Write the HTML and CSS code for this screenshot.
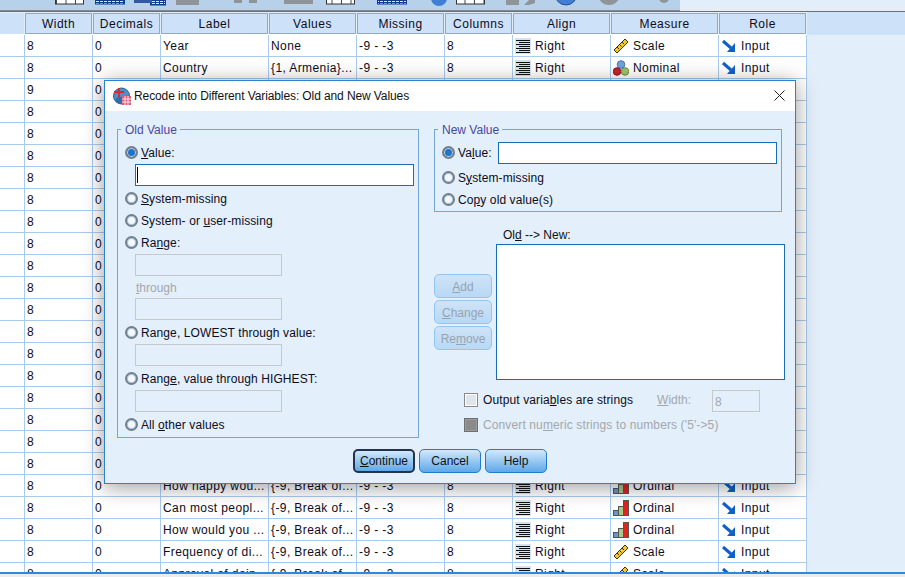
FILE: index.html
```html
<!DOCTYPE html>
<html lang="en">
<head>
    <meta charset="UTF-8">
    <title>Recode into Different Variables: Old and New Values</title>
    <link rel="stylesheet" href="styles.css">
</head>
<body>
    <svg class="defs" width="0" height="0">
        <symbol id="i-align" viewBox="0 0 16 16">
            <rect width="16" height="16" fill="#d5e3ef"/>
            <path d="M1 2.500h14M4 4.500h11M1 6.500h14M4 8.500h11M1 10.500h14M4 12.500h11M1 14.500h14" stroke="#111" fill="none"/>
        </symbol>
        <symbol id="i-scale" viewBox="0 0 16 16">
            <path d="M1 12L12 1l3 3L4 15z" fill="#f2c62c" stroke="#3d3410"/>
            <path d="M4 9l2 2M6.500 6.500l2 2M9 4l2 2" stroke="#3d3410" fill="none"/>
        </symbol>
        <symbol id="i-nominal" viewBox="0 0 16 16">
            <circle cx="8" cy="4.500" r="3.800" fill="#6ea3de" stroke="#4b76ad"/>
            <circle cx="4" cy="11.500" r="3.800" fill="#c5232b" stroke="#8c1a20"/>
            <circle cx="12" cy="11.500" r="3.800" fill="#9cc36f" stroke="#6d8f4b"/>
        </symbol>
        <symbol id="i-ordinal" viewBox="0 0 16 16">
            <rect x="0.500" y="10.500" width="5" height="5" fill="#6d94c4" stroke="#555"/>
            <rect x="5.500" y="6.500" width="5" height="9" fill="#a9c98a" stroke="#555"/>
            <rect x="10.500" y="0.500" width="5" height="15" fill="#e2231f" stroke="#555"/>
        </symbol>
        <symbol id="i-input" viewBox="0 0 14 13">
            <path d="M1 2l8 7" stroke="#1160c8" stroke-width="3" fill="none"/>
            <path d="M13 4v9H5z" fill="#1160c8"/>
        </symbol>
    </svg>

    <div class="toolbar">
        <svg class="tools" width="680" height="10">
            <defs>
                <pattern id="blue-cells" width="4" height="2" patternUnits="userSpaceOnUse">
                    <rect width="4" height="2" fill="#dbe8f7"/>
                    <path d="M0 0.500h4M3.500 0v2" stroke="#123c8c" fill="none"/>
                </pattern>
                <pattern id="white-cells" width="9.500" height="10" patternUnits="userSpaceOnUse">
                    <rect width="9.500" height="10" fill="#fff"/>
                    <path d="M9 0v10" stroke="#444" fill="none"/>
                </pattern>
            </defs>
            <g class="tool-white">
                <rect x="55.500" y="-4" width="28" height="8"/>
                <rect x="326.500" y="-4" width="28" height="8"/>
                <rect x="456.500" y="-4" width="28" height="8"/>
            </g>
            <g class="tool-blue">
                <rect x="95.500" y="-4" width="29" height="8"/>
                <rect x="377.500" y="-4" width="29" height="8"/>
                <rect x="150.500" y="-3" width="15" height="8"/>
            </g>
            <rect x="134" y="0" width="18" height="3" fill="#3555a8"/>
            <g class="tool-grey">
                <rect x="176" y="-2" width="23" height="7"/>
                <rect x="234" y="-3" width="8" height="6"/>
                <rect x="249" y="-3" width="8" height="6"/>
                <rect x="284" y="-3" width="29" height="7"/>
                <rect x="506" y="-2" width="13" height="7"/>
                <path d="M524 5l5-5h6v3l-6 2z"/>
                <circle cx="609" cy="-6" r="11"/>
                <circle cx="664" cy="-2" r="5"/>
            </g>
            <circle cx="439" cy="-2" r="8" fill="#3f7fd6"/>
            <circle cx="566" cy="-6" r="11" fill="#3f7fd6" stroke="#27508f"/>
        </svg>
        <div class="toolbar-rest"></div>
    </div>

    <div class="sheet">
        <table class="grid">
            <colgroup>
                <col class="c-type"><col class="c-68"><col class="c-68"><col class="c-108"><col class="c-88"><col class="c-88"><col class="c-68"><col class="c-98"><col class="c-108"><col class="c-88">
            </colgroup>
            <thead>
                <tr>
                    <th class="stub"></th>
                    <th>Width</th><th>Decimals</th><th>Label</th><th>Values</th><th>Missing</th><th>Columns</th><th>Align</th><th>Measure</th><th>Role</th>
                </tr>
            </thead>
            <tbody>
                <tr><td></td><td>8</td><td>0</td><td>Year</td><td>None</td><td>-9 - -3</td><td>8</td>
                    <td><svg class="ic"><use href="#i-align"/></svg>Right</td><td><svg class="ic"><use href="#i-scale"/></svg>Scale</td><td class="role"><svg class="ic-in"><use href="#i-input"/></svg>Input</td></tr>
                <tr><td></td><td>8</td><td>0</td><td>Country</td><td>{1, Armenia}...</td><td>-9 - -3</td><td>8</td>
                    <td><svg class="ic"><use href="#i-align"/></svg>Right</td><td><svg class="ic"><use href="#i-nominal"/></svg>Nominal</td><td class="role"><svg class="ic-in"><use href="#i-input"/></svg>Input</td></tr>
                <tr><td></td><td>9</td><td>0</td><td></td><td></td><td></td><td></td><td></td><td></td><td></td></tr>
                <tr><td></td><td>8</td><td>0</td><td></td><td></td><td></td><td></td><td></td><td></td><td></td></tr>
                <tr><td></td><td>8</td><td>0</td><td></td><td></td><td></td><td></td><td></td><td></td><td></td></tr>
                <tr><td></td><td>8</td><td>0</td><td></td><td></td><td></td><td></td><td></td><td></td><td></td></tr>
                <tr><td></td><td>8</td><td>0</td><td></td><td></td><td></td><td></td><td></td><td></td><td></td></tr>
                <tr><td></td><td>8</td><td>0</td><td></td><td></td><td></td><td></td><td></td><td></td><td></td></tr>
                <tr><td></td><td>8</td><td>0</td><td></td><td></td><td></td><td></td><td></td><td></td><td></td></tr>
                <tr><td></td><td>8</td><td>0</td><td></td><td></td><td></td><td></td><td></td><td></td><td></td></tr>
                <tr><td></td><td>8</td><td>0</td><td></td><td></td><td></td><td></td><td></td><td></td><td></td></tr>
                <tr><td></td><td>8</td><td>0</td><td></td><td></td><td></td><td></td><td></td><td></td><td></td></tr>
                <tr><td></td><td>8</td><td>0</td><td></td><td></td><td></td><td></td><td></td><td></td><td></td></tr>
                <tr><td></td><td>8</td><td>0</td><td></td><td></td><td></td><td></td><td></td><td></td><td></td></tr>
                <tr><td></td><td>8</td><td>0</td><td></td><td></td><td></td><td></td><td></td><td></td><td></td></tr>
                <tr><td></td><td>8</td><td>0</td><td></td><td></td><td></td><td></td><td></td><td></td><td></td></tr>
                <tr><td></td><td>8</td><td>0</td><td></td><td></td><td></td><td></td><td></td><td></td><td></td></tr>
                <tr><td></td><td>8</td><td>0</td><td></td><td></td><td></td><td></td><td></td><td></td><td></td></tr>
                <tr><td></td><td>8</td><td>0</td><td></td><td></td><td></td><td></td><td></td><td></td><td></td></tr>
                <tr><td></td><td>8</td><td>0</td><td></td><td></td><td></td><td></td><td></td><td></td><td></td></tr>
                <tr><td></td><td>8</td><td>0</td><td>How happy wou...</td><td>{-9, Break of...</td><td>-9 - -3</td><td>8</td>
                    <td><svg class="ic"><use href="#i-align"/></svg>Right</td><td><svg class="ic"><use href="#i-ordinal"/></svg>Ordinal</td><td class="role"><svg class="ic-in"><use href="#i-input"/></svg>Input</td></tr>
                <tr><td></td><td>8</td><td>0</td><td>Can most peopl...</td><td>{-9, Break of...</td><td>-9 - -3</td><td>8</td>
                    <td><svg class="ic"><use href="#i-align"/></svg>Right</td><td><svg class="ic"><use href="#i-ordinal"/></svg>Ordinal</td><td class="role"><svg class="ic-in"><use href="#i-input"/></svg>Input</td></tr>
                <tr><td></td><td>8</td><td>0</td><td>How would you ...</td><td>{-9, Break of...</td><td>-9 - -3</td><td>8</td>
                    <td><svg class="ic"><use href="#i-align"/></svg>Right</td><td><svg class="ic"><use href="#i-ordinal"/></svg>Ordinal</td><td class="role"><svg class="ic-in"><use href="#i-input"/></svg>Input</td></tr>
                <tr><td></td><td>8</td><td>0</td><td>Frequency of di...</td><td>{-9, Break of...</td><td>-9 - -3</td><td>8</td>
                    <td><svg class="ic"><use href="#i-align"/></svg>Right</td><td><svg class="ic"><use href="#i-scale"/></svg>Scale</td><td class="role"><svg class="ic-in"><use href="#i-input"/></svg>Input</td></tr>
                <tr><td></td><td>8</td><td>0</td><td>Approval of doin...</td><td>{-9, Break of...</td><td>-9 - -3</td><td>8</td>
                    <td><svg class="ic"><use href="#i-align"/></svg>Right</td><td><svg class="ic"><use href="#i-scale"/></svg>Scale</td><td class="role"><svg class="ic-in"><use href="#i-input"/></svg>Input</td></tr>
            </tbody>
        </table>
    </div>
    <div class="statusbar"></div>

    <div class="dialog">
        <div class="titlebar">
            <svg class="title-icon" width="18" height="18" viewBox="0 0 18 18">
                <circle cx="8.500" cy="9" r="8" fill="#4f8fc4" stroke="#2c5f8e"/>
                <path d="M2 13a8 8 0 0 0 13 1V10H5z" fill="#2f6ea6"/>
                <path d="M6 1v9M1 5h10" stroke="#d8283c" stroke-width="2" fill="none"/>
                <rect x="9" y="9" width="9" height="9" fill="#e05a78"/>
                <path d="M9 12h9M9 15h9M12 9v9M15 9v9" stroke="#fbe3e8" fill="none"/>
            </svg>
            <span class="title-text">Recode into Different Variables: Old and New Values</span>
            <svg class="close" width="11" height="11" viewBox="0 0 11 11">
                <path d="M0.500 0.500l10 10M10.500 0.500l-10 10" stroke="#222" fill="none"/>
            </svg>
        </div>
        <div class="body">
            <div class="columns">
                <fieldset class="group old">
                    <legend>Old Value</legend>
                    <label class="opt"><input type="radio" name="old" checked><span><u>V</u>alue:</span></label>
                    <div class="field wide focus"><span class="caret"></span></div>
                    <label class="opt"><input type="radio" name="old"><span><u>S</u>ystem-missing</span></label>
                    <label class="opt"><input type="radio" name="old"><span>System- or <u>u</u>ser-missing</span></label>
                    <label class="opt"><input type="radio" name="old"><span>Ra<u>n</u>ge:</span></label>
                    <div class="field off"></div>
                    <div class="through"><u>t</u>hrough</div>
                    <div class="field off"></div>
                    <label class="opt"><input type="radio" name="old"><span>Ran<u>g</u>e, LOWEST through value:</span></label>
                    <div class="field off"></div>
                    <label class="opt"><input type="radio" name="old"><span>Rang<u>e</u>, value through HIGHEST:</span></label>
                    <div class="field off"></div>
                    <label class="opt"><input type="radio" name="old"><span>All <u>o</u>ther values</span></label>
                </fieldset>

                <div class="right">
                    <fieldset class="group new">
                        <legend>New Value</legend>
                        <div class="new-first">
                            <label class="opt"><input type="radio" name="new" checked><span>Va<u>l</u>ue:</span></label>
                            <div class="field new-input"></div>
                        </div>
                        <label class="opt"><input type="radio" name="new"><span>S<u>y</u>stem-missing</span></label>
                        <label class="opt"><input type="radio" name="new"><span>Co<u>p</u>y old value(s)</span></label>
                    </fieldset>

                    <div class="list-title">Ol<u>d</u> --&gt; New:</div>
                    <div class="list-row">
                        <div class="side-buttons">
                            <div class="btn side"><span><u>A</u>dd</span></div>
                            <div class="btn side"><span><u>C</u>hange</span></div>
                            <div class="btn side"><span>Re<u>m</u>ove</span></div>
                        </div>
                        <div class="listbox"></div>
                    </div>

                    <div class="check-row">
                        <span class="check"></span>
                        <span class="check-label">Output varia<u>b</u>les are strings</span>
                        <span class="width-label"><u>W</u>idth:</span>
                        <div class="width-box">8</div>
                    </div>
                    <div class="check-row second">
                        <span class="check dim"></span>
                        <span class="check-label grey">Convert nu<u>m</u>eric strings to numbers ('5'-&gt;5)</span>
                    </div>
                </div>
            </div>
            <div class="footer">
                <div class="btn main default"><span><u>C</u>ontinue</span></div>
                <div class="btn main"><span>Cancel</span></div>
                <div class="btn main"><span>Help</span></div>
            </div>
        </div>
    </div>
</body>
</html>
```

FILE: styles.css
```css
html, body{
    margin: 0;
    padding: 0;
}
body{
    width: 905px;
    height: 577px;
    overflow: hidden;
    display: flex;
    flex-direction: column;
    position: relative;
    background-color: #e3eefb;
    font-family: "Liberation Sans", Arial, sans-serif;
    font-size: 12px;
    color: #0c0c1c;
}
.defs{
    position: absolute;
}

/* toolbar strip, cut off at the top of the picture */
.toolbar{
    display: flex;
    height: 11px;
    flex: none;
    border-bottom: 1px solid #2a7fc9;
}
.tools{
    display: block;
    flex: none;
    background-color: #b7d1ea;
    border-bottom: 1px solid #7d8c9b;
    box-sizing: content-box;
    height: 10px;
}
.toolbar-rest{
    flex: 1;
}
.tool-white rect{
    fill: url(#white-cells);
    stroke: #333;
}
.tool-blue rect{
    fill: url(#blue-cells);
    stroke: #123c8c;
}
.tool-grey{
    fill: #8f9499;
}

/* data grid */
.sheet{
    flex: 1;
    overflow: hidden;
    background: linear-gradient(#cde2f9 0, #cde2f9 23px, #e3eefb 23px);
    min-height: 0;
}
.grid{
    border-collapse: separate;
    border-spacing: 0;
    table-layout: fixed;
    width: 807px;
    background-color: #fff;
}
.c-type{ width: 25px; }
.c-68{ width: 68px; }
.c-88{ width: 88px; }
.c-98{ width: 98px; }
.c-108{ width: 108px; }
.grid th{
    height: 23px;
    padding: 0;
    box-sizing: border-box;
    font-weight: normal;
    text-align: center;
    letter-spacing: 0.5px;
    background-color: #cde2f9;
    border-top: 1px solid #e3eefb;
    border-bottom: 1px solid #fff;
    border-right: 1px solid #e3eefb;
    box-shadow: inset 0 0 0 1px #98a8ba;
}
.grid th.stub{
    box-shadow: none;
}
.grid td{
    height: 22px;
    padding: 0 0 0 2px;
    box-sizing: border-box;
    white-space: nowrap;
    overflow: hidden;
    border-right: 1px solid #a9cbee;
    border-bottom: 1px solid #a9cbee;
    letter-spacing: 0.4px;
}
.ic{
    width: 16px;
    height: 16px;
    vertical-align: -4px;
    margin-right: 4px;
}
.ic-in{
    width: 14px;
    height: 13px;
    vertical-align: -2px;
    margin: 0 5px 0 1px;
}
.statusbar{
    flex: none;
    height: 3px;
    border-top: 2px solid #2a8ae0;
    background-color: #ececec;
}

/* dialog window */
.dialog{
    position: absolute;
    left: 104px;
    top: 80px;
    width: 692px;
    height: 404px;
    box-sizing: border-box;
    border: 1px solid #2b83d0;
    background-color: #e3effb;
    box-shadow: 0 3px 20px rgba(0, 0, 0, 0.4);
    display: flex;
    flex-direction: column;
}
.titlebar{
    display: flex;
    align-items: center;
    height: 30px;
    flex: none;
    background-color: #fff;
    padding: 0 10px 0 8px;
}
.title-icon{
    margin-right: 3px;
}
.title-text{
    flex: 1;
    color: #111;
    letter-spacing: -0.1px;
}
.close{
    margin-bottom: 2px;
}
.body{
    flex: 1;
    padding: 10px 10px 0 12px;
    display: flex;
    flex-direction: column;
}
.columns{
    display: grid;
    grid-template-columns: 302px 351px;
    column-gap: 15px;
}
.group{
    margin: 0;
    padding: 0 0 0 7px;
    border: 1px solid #74a6d8;
    box-sizing: border-box;
    min-width: 0;
}
.group legend{
    padding: 2px 3px 0 4px;
    margin-left: -4px;
    line-height: 14px;
    color: #48489c;
}
.old{
    height: 317px;
    width: 302px;
    padding-top: 4px;
}
.new{
    height: 91px;
    width: 348px;
    padding-top: 5px;
}
.opt{
    display: flex;
    align-items: center;
    height: 22px;
    gap: 3px;
    letter-spacing: 0.1px;
}
.opt span{
    padding-top: 1px;
}
.opt input{
    appearance: none;
    margin: 0;
    width: 13px;
    height: 13px;
    flex: none;
    border-radius: 50%;
    border: 2px solid #737f8a;
    box-sizing: border-box;
    background-color: #f4f8fc;
    box-shadow: inset 0 0 0 1px #a9c6e2;
}
.opt input:checked{
    background-color: #1c74cc;
    box-shadow: inset 0 0 0 1px #c4d4e4;
}
.field{
    box-sizing: border-box;
    height: 22px;
    width: 147px;
    margin: 1px 0 1px 10px;
}
.field.wide{
    width: 279px;
}
.focus, .new-input{
    background-color: #fff;
    border: 1px solid #1a6db5;
}
.caret{
    display: block;
    width: 1px;
    height: 16px;
    margin: 2px 0 0 1px;
    background-color: #000;
}
.off{
    background-color: #e3effb;
    border: 1px solid #c6c8ca;
}
.through{
    height: 20px;
    line-height: 22px;
    margin-left: 11px;
    color: #a3a7ab;
}
.new-first{
    display: flex;
    align-items: flex-start;
    height: 22px;
}
.new-first .opt{
    height: 21px;
}
.new-input{
    width: 279px;
    margin: 0 0 0 6px;
}
.new-first + .opt{
    margin-top: 2px;
}
.list-title{
    margin: 16px 0 0 69px;
    height: 16px;
    line-height: 14px;
    color: #111;
}
.list-row{
    display: flex;
    justify-content: space-between;
}
.side-buttons{
    width: 58px;
    padding-top: 30px;
    display: flex;
    flex-direction: column;
    gap: 2px;
}
.listbox{
    width: 289px;
    height: 136px;
    box-sizing: border-box;
    background-color: #fff;
    border: 1px solid #1a6db5;
}
.btn{
    display: flex;
    align-items: center;
    justify-content: center;
    box-sizing: border-box;
    border-radius: 5px;
}
.side{
    height: 24px;
    padding-top: 1px;
    border: 1px solid #93c5f2;
    background: linear-gradient(#cee3f7, #b8d8f5);
    color: #98a3ae;
}
.check-row{
    display: flex;
    align-items: center;
    height: 22px;
    margin: 10px 0 0 30px;
}
.check-row.second{
    margin-top: 3px;
}
.check{
    width: 14px;
    height: 14px;
    box-sizing: border-box;
    flex: none;
    border: 1px solid #8a8a8a;
    outline: 1px solid #fff;
    outline-offset: -2px;
    background-color: #dfe5ea;
    margin: -2px 5px 0 0;
}
.check.dim{
    background-color: #8a8a8a;
    border-color: #6f6f6f;
    outline-color: #9c9c9c;
}
.check-label{
    margin-top: -2px;
    letter-spacing: 0.12px;
}
.check-label.grey{
    color: #a3a7ab;
}
.width-label{
    margin: -3px 0 0 24px;
    width: 55px;
    color: #a3a7ab;
}
.width-box{
    width: 48px;
    height: 22px;
    line-height: 23px;
    box-sizing: border-box;
    border: 1px solid #c6c8ca;
    padding-left: 2px;
    color: #a3a7ab;
}
.footer{
    display: flex;
    justify-content: center;
    gap: 4px;
    margin-top: 11px;
    padding-right: 2px;
}
.main{
    width: 62px;
    height: 24px;
    border: 1px solid #1f7ccc;
    background: linear-gradient(#d3e8fb, #5ea8ea);
    color: #111;
}
.default{
    border: 2px solid #22344c;
}
```
